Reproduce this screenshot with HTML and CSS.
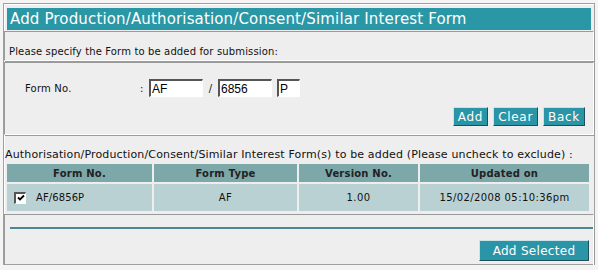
FILE: index.html
```html
<!DOCTYPE html>
<html lang="en">
<head>
  <meta charset="UTF-8" />
  <title>Add Production/Authorisation/Consent/Similar Interest Form</title>
  <link rel="stylesheet" href="styles.css">
</head>
<body>
  <div class="page">
    <div class="title">Add Production/Authorisation/Consent/Similar Interest Form</div>

    <div class="box intro">Please specify the Form to be added for submission:</div>

    <!-- Form number entry -->
    <div class="box entry">
      <div class="form-row">
        <span class="label">Form No.</span>
        <span class="colon">:</span>
        <input class="field f-prefix" type="text" value="AF">
        <span class="slash">/</span>
        <input class="field f-number" type="text" value="6856">
        <input class="field f-suffix" type="text" value="P">
      </div>
      <div class="actions">
        <button class="btn">Add</button>
        <button class="btn">Clear</button>
        <button class="btn">Back</button>
      </div>
    </div>

    <p class="caption">Authorisation/Production/Consent/Similar Interest Form(s) to be added (Please uncheck to exclude) :</p>

    <table class="list">
      <tr>
        <th class="c-no">Form No.</th>
        <th class="c-type">Form Type</th>
        <th class="c-ver">Version No.</th>
        <th class="c-date">Updated on</th>
      </tr>
      <tr>
        <td class="left">
          <span class="check" role="checkbox" aria-checked="true">
            <svg width="8" height="8" viewBox="0 0 8 8"><path d="M1 3.5 L3 5.5 L7 1.5" fill="none" stroke="#000" stroke-width="1.8"/></svg>
          </span>AF/6856P
        </td>
        <td>AF</td>
        <td>1.00</td>
        <td>15/02/2008 05:10:36pm</td>
      </tr>
    </table>

    <div class="box footer">
      <div class="rule"></div>
      <div class="actions">
        <button class="btn wide">Add Selected</button>
      </div>
    </div>
  </div>
</body>
</html>
```

FILE: styles.css
```css
body {
  margin: 0;
  background: #f4f4f4;
  font-family: "DejaVu Sans", Verdana, sans-serif;
  font-size: 10px;
  color: #111;
}
.page {
  margin: 3px 3px 0 3px;
  height: 262px;
  border: 1px solid #a0a0a0;
  box-shadow: inset 1px 1px 0 #fff;
  background: #eeeeee;
  padding: 4px 3px 0 3px;
  box-sizing: border-box;
}
.title {
  height: 22px;
  line-height: 22px;
  background: #2a97a6;
  color: #fff;
  font-size: 15px;
  letter-spacing: 0.15px;
  padding-left: 3px;
}
/* Grooved boxes */
.box {
  border: 1px solid #9a9a9a;
  border-right-color: #fff;
  border-bottom-color: #fff;
  box-shadow: 1px 1px 0 #9a9a9a;
  margin: 0 -3px 0 -3px;
}
.intro {
  height: 30px;
  box-sizing: border-box;
  padding: 14px 0 0 4px;
  margin-top: 1px;
  letter-spacing: 0.14px;
}
.entry {
  height: 73px;
  box-sizing: border-box;
  margin-top: 1px;
  padding: 16px 8px 0 20px;
}
.form-row {
  display: flex;
  align-items: center;
  height: 18px;
}
.label {
  width: 115px;
  letter-spacing: 0.2px;
}
.colon {
  width: 9px;
}
.slash {
  width: 15px;
  text-align: center;
}
.field {
  height: 18px;
  box-sizing: border-box;
  border: 1px solid #fff;
  border-top: 2px solid #555;
  border-left: 2px solid #555;
  background: #fff;
  font-family: "Liberation Sans", Arial, sans-serif;
  font-size: 12px;
  padding: 0 1px;
  margin: 0;
}
.f-prefix { width: 54px; }
.f-number { width: 54px; margin-right: 5px; }
.f-suffix { width: 23px; }
.actions {
  display: flex;
  justify-content: flex-end;
  gap: 5px;
  margin-top: 10px;
}
.btn {
  height: 19px;
  padding: 0 4px;
  background: #2a95a7;
  color: #fff;
  font-family: "DejaVu Sans", Verdana, sans-serif;
  font-size: 12px;
  letter-spacing: 0.7px;
  border: 1px solid;
  border-color: #c9e3e8 #1f4f58 #1f4f58 #c9e3e8;
  margin: 0;
}
.wide {
  width: 110px;
  height: 21px;
  letter-spacing: 0.3px;
}
.caption {
  margin: 13px -2px 1px -2px;
  font-size: 11px;
  letter-spacing: 0.15px;
  white-space: nowrap;
}
/* Selected forms table */
.list {
  width: calc(100% + 2px);
  margin: 0 -2px 0 0;
  border-spacing: 2px 2px;
  border-collapse: separate;
  position: relative;
  left: -2px;
}
.list th {
  background: #7da8aa;
  height: 18px;
  font-size: 10px;
  font-weight: bold;
  letter-spacing: 0.2px;
  color: #222;
  padding: 0;
}
.list td {
  background: #b9d1d3;
  height: 27px;
  text-align: center;
  letter-spacing: 0.4px;
  padding: 0;
}
.list td.left {
  text-align: left;
  padding-left: 7px;
  letter-spacing: 0.1px;
}
.check {
  display: inline-flex;
  align-items: center;
  justify-content: center;
  width: 12px;
  height: 12px;
  box-sizing: border-box;
  background: #fff;
  border: 1px solid #fff;
  border-top: 2px solid #555;
  border-left: 2px solid #555;
  margin-right: 10px;
  vertical-align: middle;
}
.c-no { width: 145px; }
.c-type { width: 143px; }
.c-ver { width: 119px; }
.footer {
  margin-top: 1px;
  height: 54px;
  box-sizing: border-box;
  padding: 12px 4px 0 5px;
}
.rule {
  height: 2px;
  background: #4b8796;
  margin-right: -4px;
}
.footer .actions {
  margin-top: 11px;
}
```
